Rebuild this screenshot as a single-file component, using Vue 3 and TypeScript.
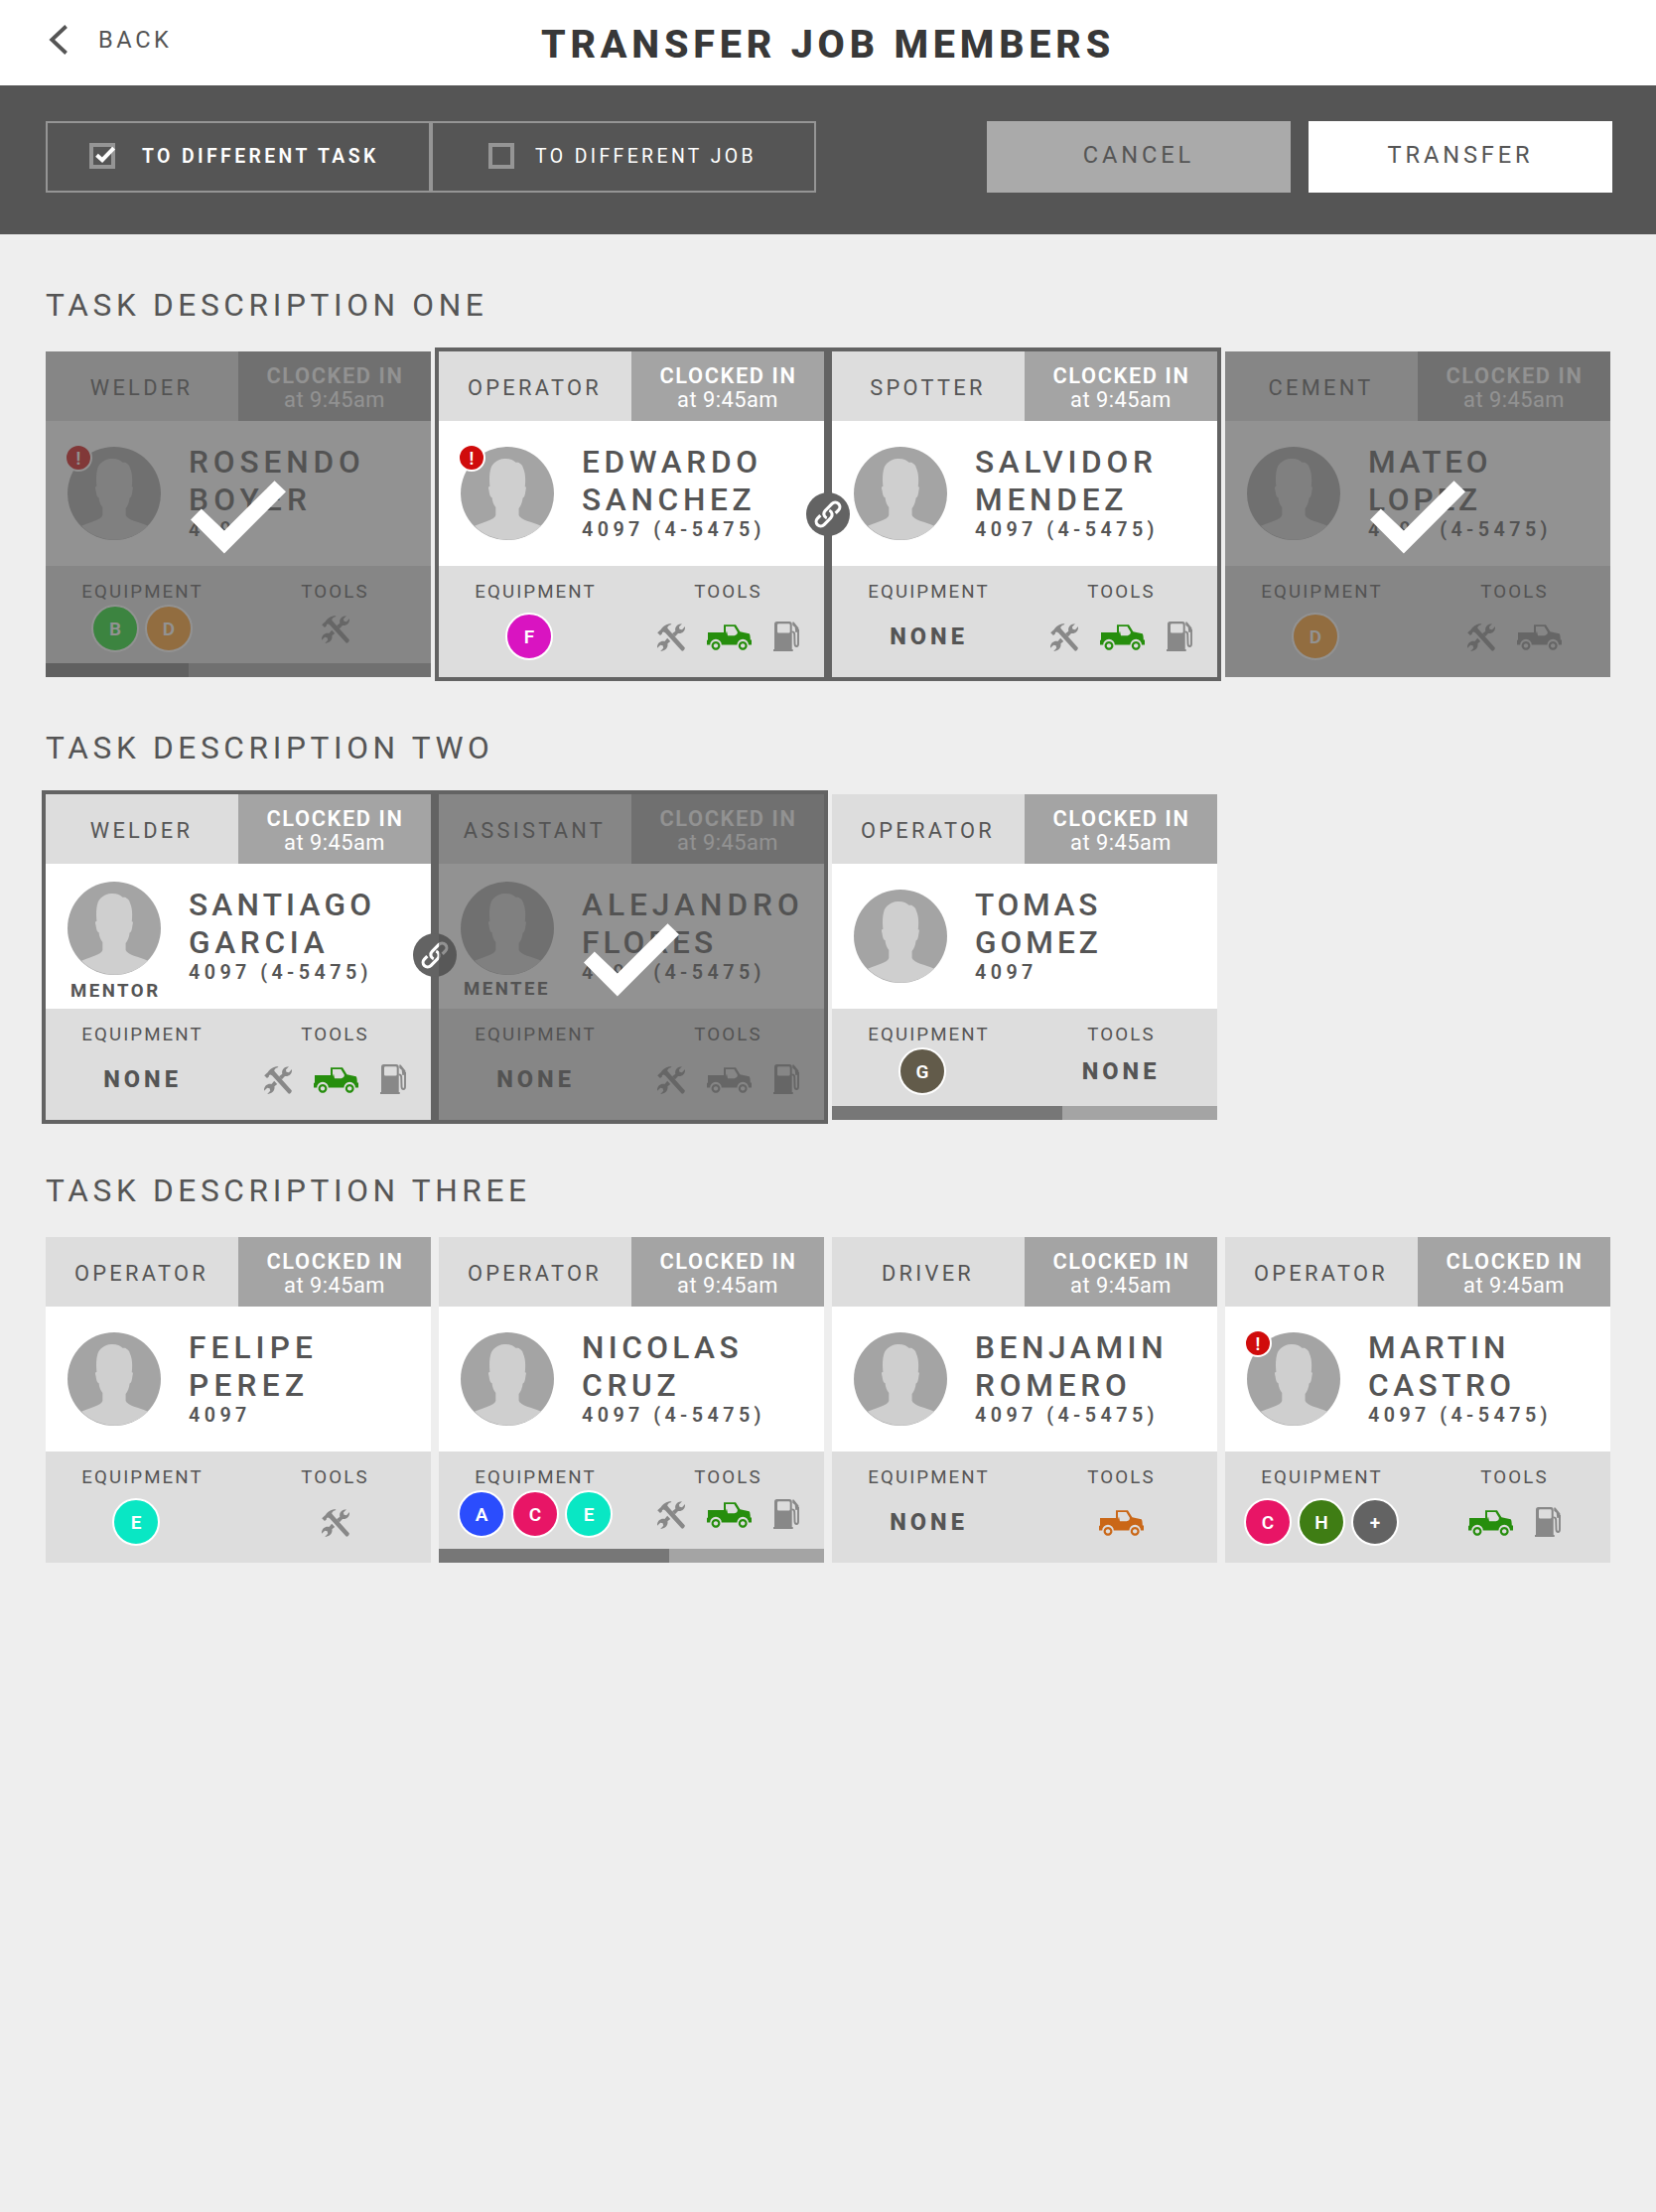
<script setup lang="ts">
type ToolName = 'repair' | 'truck' | 'truck-orange' | 'truck-gray' | 'pump'

interface Chip {
  label: string
  color: string
}

interface Member {
  role: string
  first: string
  last: string
  code: string
  // letter spacing, in px, of the first and the last name
  tracking: [number, number]
  alert?: boolean
  relation?: 'MENTOR' | 'MENTEE'
  equipment: Chip[]
  tools: ToolName[]
  progress?: number
  picked?: boolean
}

interface Group {
  linked: boolean
  linkTop?: number
  members: Member[]
}

interface Task {
  title: string
  groups: Group[]
}

const chips: Record<string, Chip> = {
  A: { label: 'A', color: '#2b4dfd' },
  B: { label: 'B', color: '#18d823' },
  C: { label: 'C', color: '#e81566' },
  D: { label: 'D', color: '#ff9a23' },
  E: { label: 'E', color: '#09e7c4' },
  F: { label: 'F', color: '#d914c1' },
  G: { label: 'G', color: '#625b4a' },
  H: { label: 'H', color: '#3f7d14' },
  more: { label: '+', color: '#636363' },
}

const full = '4097 (4-5475)'

const tasks: Task[] = [
  {
    title: 'TASK DESCRIPTION ONE',
    groups: [
      { linked: false, members: [{ role: 'WELDER', first: 'ROSENDO', last: 'BOYER', tracking: [4.9, 5.2], code: '4097', alert: true, equipment: [chips.B, chips.D], tools: ['repair'], progress: 37.1, picked: true }] },
      {
        linked: true,
        linkTop: 142,
        members: [
          { role: 'OPERATOR', first: 'EDWARDO', last: 'SANCHEZ', tracking: [4.7, 4.7], code: full, alert: true, equipment: [chips.F], tools: ['repair', 'truck', 'pump'] },
          { role: 'SPOTTER', first: 'SALVIDOR', last: 'MENDEZ', tracking: [4.7, 4.8], code: full, equipment: [], tools: ['repair', 'truck', 'pump'] },
        ],
      },
      { linked: false, members: [{ role: 'CEMENT', first: 'MATEO', last: 'LOPEZ', tracking: [3.7, 3.8], code: full, equipment: [chips.D], tools: ['repair', 'truck-gray'], picked: true }] },
    ],
  },
  {
    title: 'TASK DESCRIPTION TWO',
    groups: [
      {
        linked: true,
        linkTop: 140,
        members: [
          { role: 'WELDER', first: 'SANTIAGO', last: 'GARCIA', tracking: [4.2, 4.7], code: full, relation: 'MENTOR', equipment: [], tools: ['repair', 'truck', 'pump'] },
          { role: 'ASSISTANT', first: 'ALEJANDRO', last: 'FLORES', tracking: [5, 4], code: full, relation: 'MENTEE', equipment: [], tools: ['repair', 'truck-gray', 'pump'], picked: true },
        ],
      },
      { linked: false, members: [{ role: 'OPERATOR', first: 'TOMAS', last: 'GOMEZ', tracking: [3.7, 4], code: '4097', equipment: [chips.G], tools: [], progress: 59.8 }] },
    ],
  },
  {
    title: 'TASK DESCRIPTION THREE',
    groups: [
      {
        linked: false,
        members: [
          { role: 'OPERATOR', first: 'FELIPE', last: 'PEREZ', tracking: [5.1, 5.3], code: '4097', equipment: [chips.E], tools: ['repair'] },
          { role: 'OPERATOR', first: 'NICOLAS', last: 'CRUZ', tracking: [4.4, 4.8], code: full, equipment: [chips.A, chips.C, chips.E], tools: ['repair', 'truck', 'pump'], progress: 59.8 },
          { role: 'DRIVER', first: 'BENJAMIN', last: 'ROMERO', tracking: [4.6, 4.8], code: full, equipment: [], tools: ['truck-orange'] },
          { role: 'OPERATOR', first: 'MARTIN', last: 'CASTRO', tracking: [4, 4.5], code: full, alert: true, equipment: [chips.C, chips.H, chips.more], tools: ['truck', 'pump'] },
        ],
      },
    ],
  },
]
</script>

<template>
  <div class="page">
    <header class="topbar">
      <button class="back">
        <svg width="20" height="30" viewBox="0 0 20 30"><path d="M17.6 1.5 3.2 15l14.4 13.5" fill="none" stroke="#555" stroke-width="3.8" /></svg>
        <span>BACK</span>
      </button>
      <h1>TRANSFER JOB MEMBERS</h1>
    </header>

    <div class="toolbar">
      <div class="options">
        <label class="option active">
          <span class="box">
            <svg class="mini-tick" width="22" height="18" viewBox="0 0 22 18"><path d="M2.5 9.2 8 14.2 19.6 2.2" fill="none" stroke="#fff" stroke-width="4" /></svg>
          </span>
          <span>TO DIFFERENT TASK</span>
        </label>
        <label class="option second">
          <span class="box"></span>
          <span>TO DIFFERENT JOB</span>
        </label>
      </div>
      <div class="actions">
        <button class="btn cancel">CANCEL</button>
        <button class="btn transfer">TRANSFER</button>
      </div>
    </div>

    <section v-for="task in tasks" :key="task.title">
      <h2>{{ task.title }}</h2>
      <div class="row">
        <div v-for="(group, g) in task.groups" :key="g" class="group" :class="{ linked: group.linked }">
          <article v-for="m in group.members" :key="m.first" class="card">
            <div class="head">
              <div class="role">{{ m.role }}</div>
              <div class="clock"><b>CLOCKED IN</b><span>at 9:45am</span></div>
            </div>

            <div class="body" :class="{ related: m.relation }">
              <div class="portrait">
                <svg class="avatar" width="94" height="94" viewBox="0 0 94 94">
                  <circle cx="47" cy="47" r="47" fill="#a4a4a4" />
                  <path fill="#cfcfcf" d="M14 79.7 C22 76 34 74 35.3 69 V61 C33 58 31.8 54.5 31.6 51.2 C29 51 29 45 28 42 C27.8 40.5 28.6 40 29.4 40 C28.6 32 29 26 30.6 21 C32 17 37 12.5 44 12 C49 11.6 53 13 55.6 15.8 C57.5 15.4 59 15.8 59.8 17 C61 17.4 62.4 19 62.8 21 C65.5 27 65.4 33 64.8 40.3 C66 40.4 66 41.4 65.7 42.4 C65 46 65 50.6 62.6 51.4 C62.2 55.5 60.6 59.6 58.6 62 V69 C60 73.5 72 76 81 79.7 A47 47 0 0 1 14 79.7Z" />
                </svg>
                <span v-if="m.alert" class="alert">!</span>
                <span v-if="m.relation" class="relation" :class="{ mentee: m.relation === 'MENTEE' }">{{ m.relation }}</span>
              </div>
              <div class="ident">
                <div class="name" :style="{ letterSpacing: m.tracking[0] + 'px' }">{{ m.first }}</div>
                <div class="name" :style="{ letterSpacing: m.tracking[1] + 'px' }">{{ m.last }}</div>
                <div class="code">{{ m.code }}</div>
              </div>
            </div>

            <div class="foot" :class="{ short: m.progress }">
              <div class="col">
                <div class="label">EQUIPMENT</div>
                <div class="items chips" :class="{ single: m.equipment.length === 1 }">
                  <span v-for="(c, i) in m.equipment" :key="i" class="chip" :style="{ background: c.color }">{{ c.label }}</span>
                  <span v-if="!m.equipment.length" class="none">NONE</span>
                </div>
              </div>
              <div class="col">
                <div class="label">TOOLS</div>
                <div class="items tools">
                  <template v-for="(t, i) in m.tools" :key="i">
                    <svg v-if="t === 'repair'" class="ic" width="28" height="28" viewBox="0 0 28 28" fill="#888">
                      <path d="M.2 9.2 3.8 6C6 2.5 9.5 0 14.4.2L13.8 1.2C11.6 1.7 10.4 3 10.2 4.4L11.8 6.6 27.7 24.2C28.4 25.4 26 28.3 24.6 27.5L8.2 9.6 6.6 8.4 4.9 9 5 10.2 3 12Z" />
                      <path d="M17.9 13.3 15 10.2 18.3 7.7C17.4 3.6 20.2.3 25 .2L21.9 3.5 22.5 5.8 25 6.2 28 3.1C28.5 7.6 25 10.7 21 9.9Z" />
                      <path d="M10.2 14.8 13.2 18 10.4 20.3C11.2 24.3 8 27.9 3.2 27.9L6.2 24.7 5.6 22.3 3.2 21.7 0 24.8C-.3 20 3.2 17.2 7.4 18Z" />
                    </svg>
                    <svg v-else-if="t === 'pump'" class="ic pump" width="26" height="30" viewBox="0 0 26 30">
                      <path fill="#888" fill-rule="evenodd" d="M1 28V2.5Q1 0 3.5 0H16Q18.7 0 18.7 2.5V28H19.7V30H0V28ZM5.2 2.2Q4 2.2 4 3.4V10.2Q4 11.5 5.2 11.5H15.5Q16.7 11.5 16.7 10.2V3.4Q16.7 2.2 15.5 2.2Z" />
                      <path fill="#888" d="M19.3.6 20.6.4 25.4 6.4V10.6L22.3 11 21.7 5.8 19.3 3.8Z" />
                      <path d="M18.4 10.4Q21 10.2 21.2 12.6L21.5 22.6Q21.8 25 23.3 25 25 25 25 22.6V8" fill="none" stroke="#888" stroke-width="1.9" />
                    </svg>
                    <svg v-else class="ic" :class="t" width="45" height="26" viewBox="0 0 45 26" fill="currentColor">
                      <path fill-rule="evenodd" d="M1 8H17V.2H29L33.4 7.3 42.6 9.2Q43.6 9.6 43.8 15.6H45V20.6H42A5.8 5.8 0 0 0 30.4 20.6H14.8A5.8 5.8 0 0 0 3.2 20.6H0V15.8H1ZM19 2V9.2L20 6.4 21 11.2H27.8Q31.2 10.4 30.8 7.6L27.4 2Z" />
                      <path fill-rule="evenodd" d="M9 17a4.4 4.4 0 1 0 .01 0ZM9 19.2a2.2 2.2 0 1 1-.01 0ZM36.2 17a4.4 4.4 0 1 0 .01 0ZM36.2 19.2a2.2 2.2 0 1 1-.01 0Z" />
                    </svg>
                  </template>
                  <span v-if="!m.tools.length" class="none">NONE</span>
                </div>
              </div>
            </div>

            <div v-if="m.progress" class="bar"><i :style="{ width: m.progress + '%' }"></i></div>

            <div v-if="m.picked" class="veil">
              <svg width="96" height="74" viewBox="0 0 96 74"><path fill="#fff" d="M0 39.4 10.8 28.6 33.9 50.4 84.5.2 96 11.2 33.9 73.6Z" /></svg>
            </div>
          </article>

          <span v-if="group.linked" class="link" :style="{ top: group.linkTop + 'px' }">
            <svg width="44" height="44" viewBox="-22 -22 44 44">
              <g transform="rotate(-45)" fill="none" stroke="#fff" stroke-width="3.1">
                <path d="M-6.2-4.6H-10.3A4.6 4.6 0 0 0-10.3 4.6H-.6A4.6 4.6 0 0 0 3.6-1.8" />
                <path d="M6.2 4.6H10.3A4.6 4.6 0 0 0 10.3-4.6H.6A4.6 4.6 0 0 0-3.6 1.8" />
              </g>
            </svg>
          </span>
        </div>
      </div>
    </section>
  </div>
</template>

<style>
body {
  margin: 0;
  background: #eee;
}
</style>

<style scoped>
.page {
  width: 1668px;
  min-height: 2228px;
  background: #eee;
  color: #555;
  font-family: Roboto, 'Liberation Sans', sans-serif;
}
svg {
  display: block;
}
button {
  border: 0;
  padding: 0;
  background: none;
  color: inherit;
  font: inherit;
}
.topbar {
  display: grid;
  grid-template-columns: 400px 1fr 400px;
  height: 86px;
  background: #fff;
}
.back {
  display: flex;
  align-items: center;
  height: 80px;
  padding-left: 49px;
  gap: 30px;
  font-size: 23.6px;
  letter-spacing: 3.6px;
}
h1 {
  margin: 0;
  line-height: 90px;
  text-align: center;
  white-space: nowrap;
  color: #383838;
  font-size: 39.5px;
  font-weight: 800;
  letter-spacing: 4.8px;
}
.toolbar {
  box-sizing: border-box;
  display: flex;
  justify-content: space-between;
  height: 150px;
  padding: 36px 44px 42px 46px;
  background: #555;
}
.options {
  display: flex;
}
.option {
  box-sizing: border-box;
  display: flex;
  align-items: center;
  width: 388px;
  height: 72px;
  padding: 0 0 2px 42px;
  gap: 27px;
  border: 2px solid #959595;
  color: #fff;
  font-size: 19.4px;
  letter-spacing: 3.4px;
  white-space: nowrap;
}
.option.active {
  font-weight: 600;
}
.option.second {
  padding-left: 56px;
  gap: 21px;
}
.box {
  position: relative;
  box-sizing: border-box;
  width: 26px;
  height: 26px;
  border: 4px solid #959595;
}
.mini-tick {
  position: absolute;
  left: 1px;
  top: -1px;
}
.actions {
  display: flex;
  gap: 18px;
}
.btn {
  width: 306px;
  height: 72px;
  padding-bottom: 4px;
  font-size: 23.6px;
  letter-spacing: 3.9px;
}
.cancel {
  background: #aaa;
}
.transfer {
  background: #fff;
}
h2 {
  margin: 0;
  padding: 52px 0 26px 46px;
  line-height: 40px;
  font-size: 31.6px;
  font-weight: 400;
  letter-spacing: 4.65px;
}
.row {
  display: flex;
  gap: 8px;
  padding-left: 46px;
}
.group {
  position: relative;
  display: flex;
  gap: 8px;
}
.linked {
  background: #636363;
  box-shadow: 0 0 0 4px #636363;
}
.card {
  position: relative;
  display: flex;
  flex-direction: column;
  width: 388px;
  height: 328px;
}
.head {
  display: flex;
  height: 70px;
}
.role,
.clock {
  width: 194px;
}
.role {
  background: #ddd;
  line-height: 73px;
  text-align: center;
  text-indent: -1px;
  font-size: 21.8px;
  letter-spacing: 3.3px;
}
.clock {
  box-sizing: border-box;
  display: flex;
  flex-direction: column;
  align-items: center;
  padding-top: 13px;
  background: #a4a4a4;
  color: #fff;
  font-size: 21.8px;
  line-height: 24px;
}
.clock b {
  font-weight: 600;
  letter-spacing: 1.6px;
  margin-right: -1px;
}
.clock span {
  letter-spacing: 0.5px;
}
.body {
  display: flex;
  height: 146px;
  background: #fff;
}
.portrait {
  position: relative;
  width: 94px;
  margin-left: 22px;
  padding-top: 26px;
}
.related .portrait {
  padding-top: 18px;
}
.relation {
  display: block;
  margin-top: 5px;
  margin-left: 3px;
  line-height: 22px;
  font-size: 18.6px;
  font-weight: 700;
  letter-spacing: 2.5px;
}
.mentee {
  margin-top: 3px;
}
.alert {
  position: absolute;
  left: -3px;
  top: 23px;
  width: 24px;
  height: 24px;
  border: 2px solid #fff;
  border-radius: 50%;
  background: #d00c0c;
  color: #fff;
  text-align: center;
  line-height: 25px;
  font-size: 18px;
  font-weight: 600;
}
.ident {
  padding: 23px 0 0 28px;
  white-space: nowrap;
}
.name {
  height: 38px;
  line-height: 38px;
  font-size: 31.6px;
  font-weight: 500;
}
.code {
  height: 22px;
  line-height: 22px;
  font-size: 19.7px;
  font-weight: 600;
  letter-spacing: 4.45px;
}
.foot {
  display: flex;
  flex: 1;
  background: #ddd;
}
.col {
  display: flex;
  flex-direction: column;
  width: 194px;
}
.label {
  height: 30px;
  line-height: 52px;
  text-align: center;
  text-indent: 1px;
  font-size: 18.7px;
  letter-spacing: 2.1px;
}
.items {
  display: flex;
  flex: 1;
  align-items: center;
  justify-content: center;
}
.short .items {
  padding-bottom: 2px;
}
.chips {
  gap: 6px;
}
.chips.single {
  padding-right: 12px;
}
.chip {
  width: 44px;
  height: 44px;
  border: 2px solid #fff;
  border-radius: 50%;
  color: #fff;
  text-align: center;
  line-height: 45px;
  font-size: 19px;
  font-weight: 600;
}
.tools {
  gap: 22px;
  padding-left: 1px;
}
.ic {
  margin-top: 2px;
}
.pump {
  margin-top: 0;
}
.truck {
  color: #268e0d;
}
.truck-orange {
  color: #ca6717;
}
.truck-gray {
  color: #888;
}
.none {
  margin-top: -1px;
  padding-left: 1px;
  font-size: 23.6px;
  font-weight: 800;
  letter-spacing: 4px;
}
.tools .none {
  margin-left: -2px;
}
.bar {
  height: 14px;
  background: #a4a4a4;
}
.bar i {
  display: block;
  height: 14px;
  background: #777;
}
.veil {
  position: absolute;
  z-index: 2;
  inset: 0;
  display: flex;
  align-items: center;
  justify-content: center;
  padding-top: 6px;
  box-sizing: border-box;
  background: rgba(83, 83, 83, 0.63);
}
.link {
  position: absolute;
  z-index: 1;
  left: 370px;
  width: 44px;
  height: 44px;
  border-radius: 50%;
  background: #636363;
}
</style>
